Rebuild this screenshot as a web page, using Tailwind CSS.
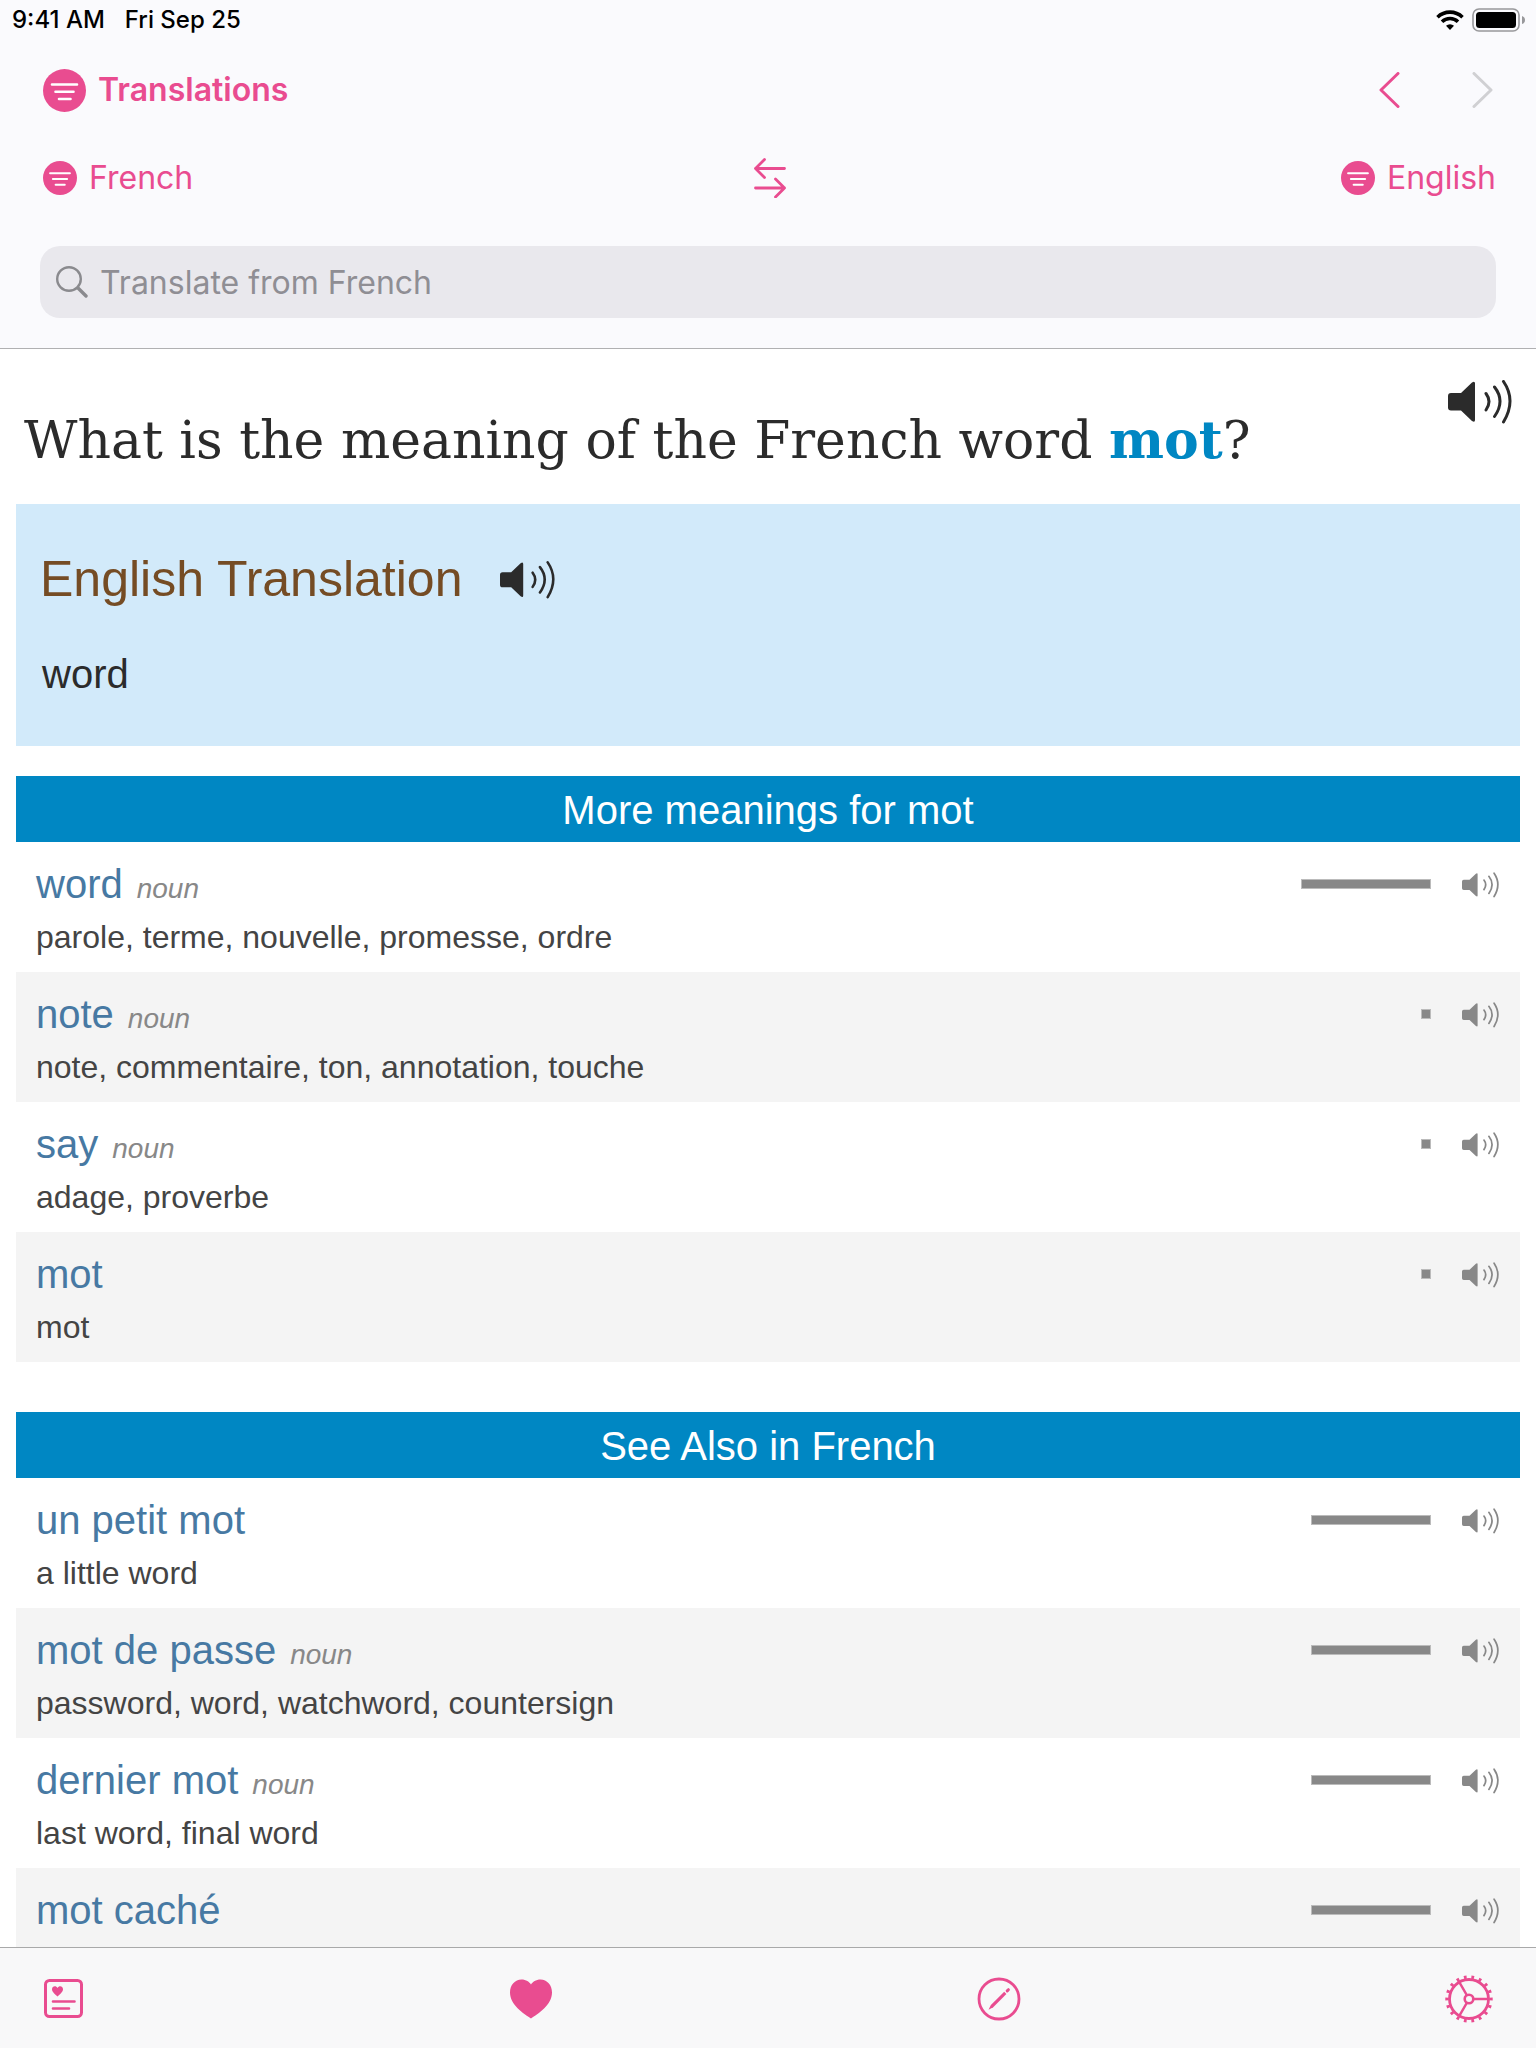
<!DOCTYPE html>
<html lang="en">

<head>
    <meta charset="UTF-8">
    <meta name="viewport" content="width=device-width, initial-scale=1.0">
    <title>Translations</title>
    <script src="https://cdn.jsdelivr.net/npm/@tailwindcss/browser@4"></script>
</head>

<body class="flex h-screen flex-col overflow-hidden bg-white font-['Liberation_Sans',sans-serif] text-[#2b2b2b]">

    <!-- Shared icons -->
    <svg class="hidden">
        <symbol id="speaker" viewBox="0 0 64 44">
            <path fill="currentColor" d="M3 13h10L24 2.500q3-2 3 1V40q0 3-3 1L13 30.500H3q-3 0-3-3V16q0-3 3-3z" />
            <path fill="none" stroke="currentColor" stroke-width="3" stroke-linecap="round" d="M38 13.500q6 8 0 16.500M46.500 7q11 14 0 29.500M55.500 1.500q13 19 0 40.500" />
        </symbol>
        <symbol id="filter" viewBox="0 0 43 43">
            <circle cx="21.500" cy="21.500" r="21.500" fill="currentColor" />
            <path stroke="#fff" stroke-width="2.600" stroke-linecap="round" d="M9 15.500h25M12.500 22.700h18M16 30h11.500" />
        </symbol>
    </svg>

    <header class="border-b border-[#b0b0b2] bg-[#fafafd] font-[Inter,sans-serif]">
        <!-- Status bar -->
        <div class="flex h-10 items-center justify-between pr-2.5 pl-3 text-[24px] font-medium text-black">
            <div class="flex gap-5">
                <span>9:41 AM</span>
                <span>Fri Sep 25</span>
            </div>
            <div class="flex items-center gap-2">
                <svg class="h-5 w-7" viewBox="0 0 28 20" fill="none" stroke="#000" stroke-width="3.600">
                    <path d="M1.500 7.200a18 18 0 0 1 25 0" />
                    <path d="M6 11.700a11.500 11.500 0 0 1 16 0" />
                    <path fill="#000" stroke="none" d="M14 20l-4-4.200a6 6 0 0 1 8 0z" />
                </svg>
                <svg class="h-6 w-[54px]" viewBox="0 0 54 24">
                    <rect x="1" y="1" width="46" height="22" rx="6" fill="none" stroke="#98989b" stroke-width="1.600" />
                    <rect x="4" y="4" width="40" height="16" rx="3.500" />
                    <path fill="#98989b" d="M50 8q3 1 3 4t-3 4z" />
                </svg>
            </div>
        </div>

        <!-- Navigation -->
        <nav class="flex h-[100px] items-center justify-between px-[43px] text-[#e94c90]">
            <button class="flex items-center gap-3 text-[32px] font-semibold">
                <svg class="size-[43px]"><use href="#filter" /></svg>
                Translations
            </button>
            <div class="flex items-center gap-[72px]">
                <button aria-label="Back">
                    <svg class="h-9 w-[21px]" viewBox="0 0 21 36" fill="none" stroke="currentColor" stroke-width="3" stroke-linecap="round" stroke-linejoin="round"><path d="M19 1.500L2 18l17 16.500" /></svg>
                </button>
                <button class="text-[#d0d0d3]" aria-label="Forward" disabled>
                    <svg class="h-9 w-[21px]" viewBox="0 0 21 36" fill="none" stroke="currentColor" stroke-width="3" stroke-linecap="round" stroke-linejoin="round"><path d="M2 1.500L19 18 2 34.500" /></svg>
                </button>
            </div>
        </nav>

        <!-- Languages -->
        <div class="grid h-[76px] grid-cols-[1fr_auto_1fr] items-center pr-10 pl-[43px] text-[32px] text-[#e94c90]">
            <button class="flex items-center gap-3 justify-self-start">
                <svg class="size-[34px]"><use href="#filter" /></svg>
                French
            </button>
            <button aria-label="Swap languages">
                <svg class="h-10 w-8" viewBox="0 0 32 40" fill="none" stroke="currentColor" stroke-width="2.800" stroke-linecap="round" stroke-linejoin="round"><path d="M30.500 10.500h-29M10.500 1.500l-9 9 9 9M1.500 30h29M21.500 21l9 9-9 9" /></svg>
            </button>
            <button class="flex items-center gap-3 justify-self-end">
                <svg class="size-[34px]"><use href="#filter" /></svg>
                English
            </button>
        </div>

        <!-- Search -->
        <div class="px-10 py-[30px]">
            <label class="flex h-[72px] items-center gap-3 rounded-[20px] bg-[#e9e8ed] px-4 text-[#8a8a8e]">
                <svg class="size-8 shrink-0" viewBox="0 0 32 32" fill="none" stroke="currentColor" stroke-linecap="round"><circle cx="13" cy="13" r="11.800" stroke-width="2.400" /><path stroke-width="3.400" d="M22 22l8 8" /></svg>
                <input type="text" aria-label="Search" placeholder="Translate from French" class="h-full w-full bg-transparent text-[32px] outline-none placeholder:text-[#8f8e94]">
            </label>
        </div>
    </header>

    <main class="min-h-0 flex-1 overflow-hidden px-4">
        <div class="flex items-start justify-between pr-2 pb-[34px] pl-2">
            <h1 class="pt-[61px] font-['DejaVu_Serif',serif] text-[52px] leading-[60px]">What is the meaning of the French word <strong class="text-[#0087c3]">mot</strong>?</h1>
            <button class="mt-[31px] shrink-0" aria-label="Listen to mot">
                <svg class="h-11 w-16"><use href="#speaker" /></svg>
            </button>
        </div>

        <!-- Translation -->
        <section class="bg-[#d2eafa] px-6 pt-[45px] pb-12">
            <div class="flex items-center gap-[38px]">
                <h2 class="text-[50px] leading-[60px] text-[#754c24]">English Translation</h2>
                <button class="pt-0.5" aria-label="Listen to translation">
                    <svg class="h-[38px] w-[55px]"><use href="#speaker" /></svg>
                </button>
            </div>
            <p class="mt-[41px] pl-0.5 text-[40px] leading-[48px]">word</p>
        </section>

        <!-- More meanings -->
        <section class="mt-[30px]">
            <h3 class="bg-[#0087c3] pt-2.5 pb-2 text-center text-[40px] leading-[48px] text-white">More meanings for mot</h3>
            <ul class="text-[32px] leading-10 text-[#444]">
                <li class="pr-[21px] pl-5 pt-[18px] pb-[15px] even:bg-[#f4f4f4]">
                    <div class="flex items-center">
                        <a href="#" class="text-[40px] leading-[48px] text-[#4779a3]">word</a>
                        <i class="pt-2.5 pl-3.5 text-[28px] leading-8 text-[#888]">noun</i>
                        <div class="ml-auto h-2.5 w-[130px] border border-[#bbb] bg-[#888]"></div>
                        <button class="ml-[31px] pt-0.5 text-[#888]" aria-label="Listen to word"><svg class="h-[26px] w-[37px]"><use href="#speaker" /></svg></button>
                    </div>
                    <p class="mt-[9px]">parole, terme, nouvelle, promesse, ordre</p>
                </li>
                <li class="pr-[21px] pl-5 pt-[18px] pb-[15px] even:bg-[#f4f4f4]">
                    <div class="flex items-center">
                        <a href="#" class="text-[40px] leading-[48px] text-[#4779a3]">note</a>
                        <i class="pt-2.5 pl-3.5 text-[28px] leading-8 text-[#888]">noun</i>
                        <div class="ml-auto h-2.5 w-2.5 border border-[#bbb] bg-[#888]"></div>
                        <button class="ml-[31px] pt-0.5 text-[#888]" aria-label="Listen to note"><svg class="h-[26px] w-[37px]"><use href="#speaker" /></svg></button>
                    </div>
                    <p class="mt-[9px]">note, commentaire, ton, annotation, touche</p>
                </li>
                <li class="pr-[21px] pl-5 pt-[18px] pb-[15px] even:bg-[#f4f4f4]">
                    <div class="flex items-center">
                        <a href="#" class="text-[40px] leading-[48px] text-[#4779a3]">say</a>
                        <i class="pt-2.5 pl-3.5 text-[28px] leading-8 text-[#888]">noun</i>
                        <div class="ml-auto h-2.5 w-2.5 border border-[#bbb] bg-[#888]"></div>
                        <button class="ml-[31px] pt-0.5 text-[#888]" aria-label="Listen to say"><svg class="h-[26px] w-[37px]"><use href="#speaker" /></svg></button>
                    </div>
                    <p class="mt-[9px]">adage, proverbe</p>
                </li>
                <li class="pr-[21px] pl-5 pt-[18px] pb-[15px] even:bg-[#f4f4f4]">
                    <div class="flex items-center">
                        <a href="#" class="text-[40px] leading-[48px] text-[#4779a3]">mot</a>
                        <div class="ml-auto h-2.5 w-2.5 border border-[#bbb] bg-[#888]"></div>
                        <button class="ml-[31px] pt-0.5 text-[#888]" aria-label="Listen to mot"><svg class="h-[26px] w-[37px]"><use href="#speaker" /></svg></button>
                    </div>
                    <p class="mt-[9px]">mot</p>
                </li>
            </ul>
        </section>

        <!-- See also -->
        <section class="mt-[50px]">
            <h3 class="bg-[#0087c3] pt-2.5 pb-2 text-center text-[40px] leading-[48px] text-white">See Also in French</h3>
            <ul class="text-[32px] leading-10 text-[#444]">
                <li class="pr-[21px] pl-5 pt-[18px] pb-[15px] even:bg-[#f4f4f4]">
                    <div class="flex items-center">
                        <a href="#" class="text-[40px] leading-[48px] text-[#4779a3]">un petit mot</a>
                        <div class="ml-auto h-2.5 w-[120px] border border-[#bbb] bg-[#888]"></div>
                        <button class="ml-[31px] pt-0.5 text-[#888]" aria-label="Listen to un petit mot"><svg class="h-[26px] w-[37px]"><use href="#speaker" /></svg></button>
                    </div>
                    <p class="mt-[9px]">a little word</p>
                </li>
                <li class="pr-[21px] pl-5 pt-[18px] pb-[15px] even:bg-[#f4f4f4]">
                    <div class="flex items-center">
                        <a href="#" class="text-[40px] leading-[48px] text-[#4779a3]">mot de passe</a>
                        <i class="pt-2.5 pl-3.5 text-[28px] leading-8 text-[#888]">noun</i>
                        <div class="ml-auto h-2.5 w-[120px] border border-[#bbb] bg-[#888]"></div>
                        <button class="ml-[31px] pt-0.5 text-[#888]" aria-label="Listen to mot de passe"><svg class="h-[26px] w-[37px]"><use href="#speaker" /></svg></button>
                    </div>
                    <p class="mt-[9px]">password, word, watchword, countersign</p>
                </li>
                <li class="pr-[21px] pl-5 pt-[18px] pb-[15px] even:bg-[#f4f4f4]">
                    <div class="flex items-center">
                        <a href="#" class="text-[40px] leading-[48px] text-[#4779a3]">dernier mot</a>
                        <i class="pt-2.5 pl-3.5 text-[28px] leading-8 text-[#888]">noun</i>
                        <div class="ml-auto h-2.5 w-[120px] border border-[#bbb] bg-[#888]"></div>
                        <button class="ml-[31px] pt-0.5 text-[#888]" aria-label="Listen to dernier mot"><svg class="h-[26px] w-[37px]"><use href="#speaker" /></svg></button>
                    </div>
                    <p class="mt-[9px]">last word, final word</p>
                </li>
                <li class="pr-[21px] pl-5 pt-[18px] pb-[15px] even:bg-[#f4f4f4]">
                    <div class="flex items-center">
                        <a href="#" class="text-[40px] leading-[48px] text-[#4779a3]">mot caché</a>
                        <div class="ml-auto h-2.5 w-[120px] border border-[#bbb] bg-[#888]"></div>
                        <button class="ml-[31px] pt-0.5 text-[#888]" aria-label="Listen to mot caché"><svg class="h-[26px] w-[37px]"><use href="#speaker" /></svg></button>
                    </div>
                </li>
            </ul>
        </section>
    </main>

    <!-- Tab bar -->
    <footer class="flex h-[101px] shrink-0 items-center justify-between border-t border-[#a9a9a9] bg-[#f8f8f9] pt-0.5 pr-[43px] pl-10 text-[#e94c90]">
        <button aria-label="Translations">
            <svg class="size-12" viewBox="0 0 48 48" fill="none" stroke="currentColor" stroke-linecap="round">
                <rect x="5.500" y="5.500" width="36" height="36" rx="4" stroke-width="3" />
                <path fill="currentColor" stroke="none" d="M17.500 21.500C13.500 18 12 16.500 12 14.300c0-3.600 4.200-4 5.500-1.400 1.300-2.600 5.500-2.200 5.500 1.400 0 2.200-1.500 3.700-5.500 7.200z" />
                <path stroke-width="2.600" d="M13 26.500h21.500M13 33.500h16" />
            </svg>
        </button>
        <button aria-label="Favorites">
            <svg class="size-12" viewBox="0 0 48 48" fill="currentColor"><path d="M23 43.500C16 39 2 30 2 17.500 2 10 7 4.500 13.500 4.500c4.500 0 8 2.500 9.500 5 1.500-2.500 5-5 9.500-5C39 4.500 44 10 44 17.500 44 30 30 39 23 43.500z" /></svg>
        </button>
        <button aria-label="Edit">
            <svg class="size-12" viewBox="0 0 48 48" fill="none" stroke="currentColor">
                <circle cx="22" cy="24" r="20" stroke-width="2.800" />
                <path fill="currentColor" stroke="none" d="M27.200 16.800l2.200 2.200-13.200 13.200-4.700 2.600 2.400-4.900z" />
                <path stroke-width="3" d="M30.200 15.900l1.200-1.200" stroke-linecap="round" />
            </svg>
        </button>
        <button aria-label="Settings">
            <svg class="size-12" viewBox="0 0 48 48" fill="none" stroke="currentColor">
                <circle cx="24" cy="24" r="19.500" stroke-width="2.800" />
                <!-- 18 teeth, one every 20 degrees -->
                <circle cx="24" cy="24" r="22" stroke-width="3.400" pathLength="180" stroke-dasharray="3.600 6.400" stroke-dashoffset="1.800" />
                <circle cx="24" cy="24" r="4.300" stroke-width="2.600" />
                <path stroke-width="2.400" d="M28.500 24H43M21.800 20.100L14.300 7.200M21.800 27.900l-7.500 12.900" />
            </svg>
        </button>
    </footer>
</body>

</html>
